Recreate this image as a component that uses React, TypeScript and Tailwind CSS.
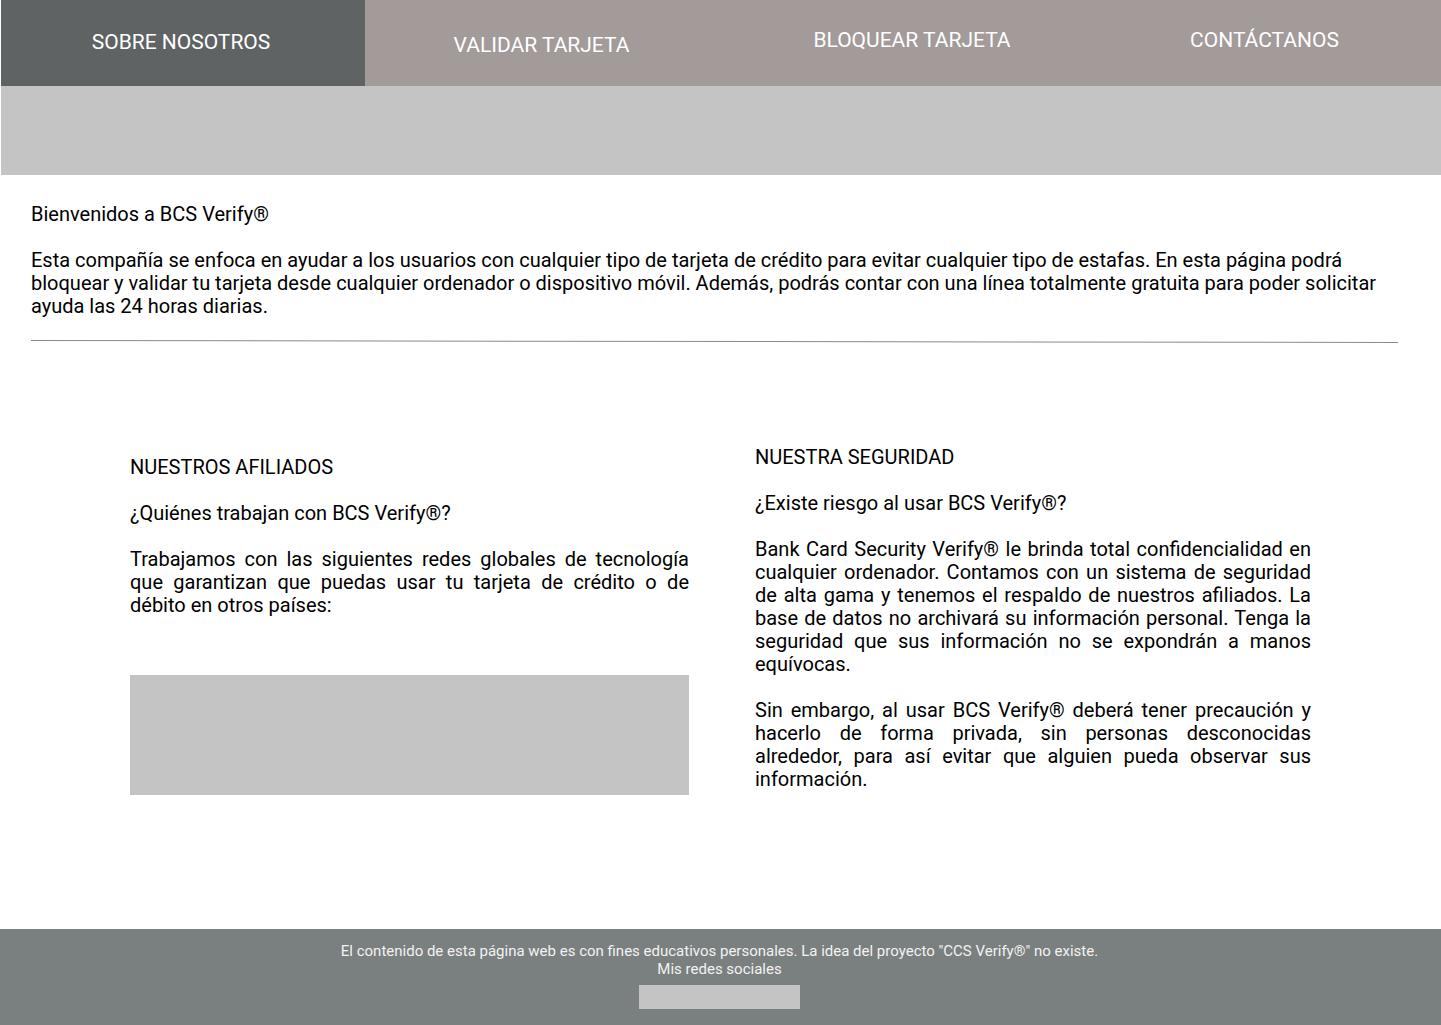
import React from "react";

const navItems = [
  { label: "SOBRE NOSOTROS", cls: "w-[364px] bg-[#5f6363] pt-[30px] pr-[4px]" },
  { label: "VALIDAR TARJETA", cls: "w-[353px] bg-[#a39a9a] pt-[33px]" },
  { label: "BLOQUEAR TARJETA", cls: "w-[370px] bg-[#a39a9a] pt-[28px] pl-[18px]" },
  { label: "CONTÁCTANOS", cls: "flex-1 bg-[#a39a9a] pt-[28px]" },
];

export default function App() {
  return (
    <div className="min-h-[1025px] flex flex-col bg-white text-black font-['Roboto',sans-serif]">
      {/* Header nav */}
      <nav className="flex h-[86px] ml-px">
        {navItems.map((item) => (
          <a key={item.label} href="#" className={`${item.cls} text-center text-[21px] leading-[25px] text-white`}>
            {item.label}
          </a>
        ))}
      </nav>

      {/* Banner placeholder */}
      <div className="h-[89px] ml-px bg-[#c4c4c4]" />

      {/* Intro */}
      <section className="px-[31px] pt-[28px] text-[20px] leading-[23px]">
        <p>Bienvenidos a BCS Verify®</p>
        <p className="mt-[23px] pr-[12px]">
          Esta compañía se enfoca en ayudar a los usuarios con cualquier tipo de tarjeta de crédito para evitar cualquier tipo de estafas. En esta página podrá bloquear y validar tu tarjeta desde cualquier ordenador o dispositivo móvil. Además, podrás contar con una línea totalmente gratuita para poder solicitar ayuda las 24 horas diarias.
        </p>
        <hr className="mt-[23px] mr-[12px] border-0 h-px bg-[#8a8a8a] rotate-[0.08deg]" />
      </section>

      {/* Two columns */}
      <section className="flex items-start gap-[66px] pl-[130px] pt-[104px] text-[20px] leading-[23px]">
        <div className="w-[559px] pt-[10px]">
          <h2>NUESTROS AFILIADOS</h2>
          <p className="mt-[23px]">¿Quiénes trabajan con BCS Verify®?</p>
          <p className="mt-[23px] text-justify">
            Trabajamos con las siguientes redes globales de tecnología que garantizan que puedas usar tu tarjeta de crédito o de débito en otros países:
          </p>
          <div className="mt-[58px] h-[120px] bg-[#c4c4c4]" />
        </div>
        <div className="w-[556px]">
          <h2>NUESTRA SEGURIDAD</h2>
          <p className="mt-[23px]">¿Existe riesgo al usar BCS Verify®?</p>
          <p className="mt-[23px] text-justify">
            Bank Card Security Verify® le brinda total confidencialidad en cualquier ordenador. Contamos con un sistema de seguridad de alta gama y tenemos el respaldo de nuestros afiliados. La base de datos no archivará su información personal. Tenga la seguridad que sus información no se expondrán a manos equívocas.
          </p>
          <p className="mt-[23px] text-justify">
            Sin embargo, al usar BCS Verify® deberá tener precaución y hacerlo de forma privada, sin personas desconocidas alrededor, para así evitar que alguien pueda observar sus información.
          </p>
        </div>
      </section>

      {/* Footer */}
      <footer className="mt-auto h-[96px] bg-[#7a807f] flex flex-col items-center pt-[13px] pr-[2px] text-[15px] leading-[18px] text-[#f2f2f2]">
        <p>El contenido de esta página web es con fines educativos personales. La idea del proyecto "CCS Verify®" no existe.</p>
        <p>Mis redes sociales</p>
        <div className="mt-[7px] w-[161px] h-[24px] bg-[#c4c4c4]" />
      </footer>
    </div>
  );
}
